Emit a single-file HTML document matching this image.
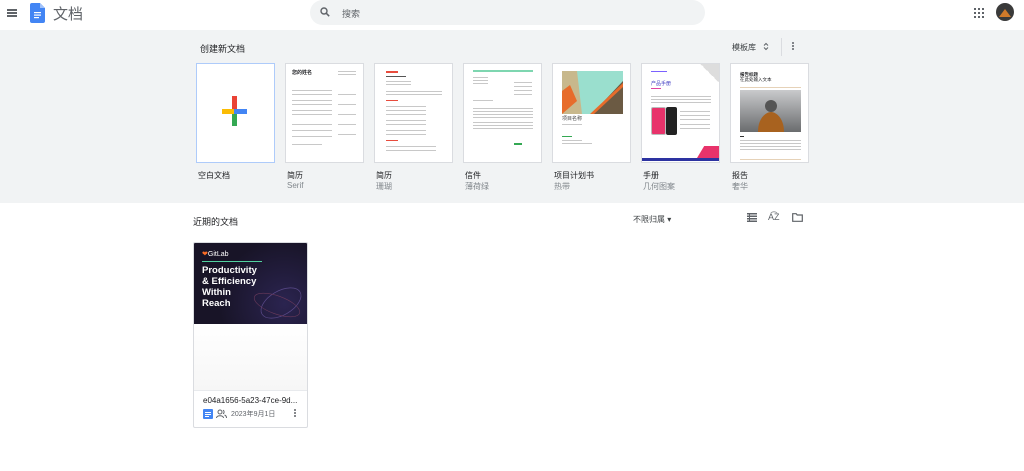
<!DOCTYPE html>
<html><head><meta charset="utf-8"><style>
*{margin:0;padding:0;box-sizing:border-box}
body{width:1024px;height:471px;overflow:hidden;background:#fff;font-family:"Liberation Sans","Noto Sans CJK SC",sans-serif;color:#202124;position:relative}
.abs{position:absolute}
.gray{position:absolute;left:0;top:30px;width:1024px;height:173px;background:#f1f3f4}
.card{position:absolute;top:63px;width:79px;height:100px;background:#fff;border:1px solid #dadce0;overflow:hidden}
.lbl{position:absolute;top:170px;font-size:8px;color:#202124}
.sub{position:absolute;top:181px;font-size:8px;color:#80868b}
.ln{position:absolute;height:1px;background:#c8c8c8}
</style></head><body>
<div class="abs" style="left:7px;top:9px;width:10px;height:1.5px;background:#5f6368"></div>
<div class="abs" style="left:7px;top:12px;width:10px;height:1.5px;background:#5f6368"></div>
<div class="abs" style="left:7px;top:15px;width:10px;height:1.5px;background:#5f6368"></div>
<svg class="abs" style="left:30px;top:3px" width="15" height="20" viewBox="0 0 15 20"><path d="M2 0h8l5 5v13a2 2 0 0 1-2 2H2a2 2 0 0 1-2-2V2a2 2 0 0 1 2-2z" fill="#4285f4"/><path d="M10 0v5h5z" fill="#a1c2fa"/><rect x="4" y="9" width="7" height="1.2" fill="#fff"/><rect x="4" y="11.5" width="7" height="1.2" fill="#fff"/><rect x="4" y="14" width="5" height="1.2" fill="#fff"/></svg>
<div class="abs" style="left:53px;top:3px;font-size:15px;color:#5f6368">文档</div>
<div class="abs" style="left:310px;top:0;width:395px;height:25px;background:#f1f3f4;border-radius:13px"></div>
<svg class="abs" style="left:320px;top:7px" width="10" height="10" viewBox="0 0 10 10"><circle cx="4" cy="4" r="3" fill="none" stroke="#5f6368" stroke-width="1.4"/><path d="M6.2 6.2L9.2 9.2" stroke="#5f6368" stroke-width="1.5"/></svg>
<div class="abs" style="left:342px;top:7px;font-size:9px;color:#5f6368">搜索</div>
<svg class="abs" style="left:974px;top:8px" width="10" height="10"><g fill="#5f6368"><rect x="0" y="0" width="2" height="2"/><rect x="4" y="0" width="2" height="2"/><rect x="8" y="0" width="2" height="2"/><rect x="0" y="4" width="2" height="2"/><rect x="4" y="4" width="2" height="2"/><rect x="8" y="4" width="2" height="2"/><rect x="0" y="8" width="2" height="2"/><rect x="4" y="8" width="2" height="2"/><rect x="8" y="8" width="2" height="2"/></g></svg>
<svg class="abs" style="left:996px;top:3px" width="18" height="18"><circle cx="9" cy="9" r="9" fill="#3a3a3a"/><path d="M3 14l6-8 6 8z" fill="#d07a2a"/></svg>
<div class="gray"></div>
<div class="abs" style="left:200px;top:42px;font-size:9px;color:#202124">创建新文档</div>
<div class="abs" style="left:732px;top:42px;font-size:8px;color:#3c4043">模板库</div>
<svg class="abs" style="left:763px;top:42px" width="6" height="9"><path d="M1 3.5L3 1.5 5 3.5M1 5.5L3 7.5 5 5.5" fill="none" stroke="#5f6368" stroke-width="1"/></svg>
<div class="abs" style="left:781px;top:38px;width:1px;height:18px;background:#dadce0"></div>
<div class="abs" style="left:792px;top:42px;width:2px;height:2px;background:#5f6368;border-radius:1px;box-shadow:0 3px 0 #5f6368,0 6px 0 #5f6368"></div>
<div class="card" style="left:196px;border-color:#aecbfa">
 <div class="abs" style="left:25px;top:45px;width:12px;height:5px;background:#fbbc04"></div>
 <div class="abs" style="left:37px;top:45px;width:13px;height:5px;background:#4285f4"></div>
 <div class="abs" style="left:35px;top:32px;width:5px;height:13px;background:#ea4335"></div>
 <div class="abs" style="left:35px;top:50px;width:5px;height:12px;background:#34a853"></div>
</div>
<div class="lbl" style="left:198px">空白文档</div>
<div class="card" style="left:285px">
 <div class="abs" style="left:6px;top:5px;font-size:5px;font-weight:bold">您的姓名</div>
 <div class="ln" style="left:52px;top:7px;width:18px"></div><div class="ln" style="left:52px;top:10px;width:18px"></div>
 <div class="ln" style="left:6px;top:26px;width:40px"></div><div class="ln" style="left:6px;top:30px;width:40px"></div><div class="ln" style="left:6px;top:36px;width:40px"></div><div class="ln" style="left:6px;top:40px;width:40px"></div><div class="ln" style="left:6px;top:46px;width:40px"></div><div class="ln" style="left:6px;top:50px;width:40px"></div><div class="ln" style="left:6px;top:60px;width:40px"></div><div class="ln" style="left:6px;top:66px;width:40px"></div><div class="ln" style="left:6px;top:72px;width:40px"></div><div class="ln" style="left:6px;top:80px;width:30px"></div>
 <div class="ln" style="left:52px;top:30px;width:18px"></div><div class="ln" style="left:52px;top:40px;width:18px"></div><div class="ln" style="left:52px;top:50px;width:18px"></div><div class="ln" style="left:52px;top:60px;width:18px"></div><div class="ln" style="left:52px;top:70px;width:18px"></div>
</div>
<div class="lbl" style="left:287px">简历</div><div class="sub" style="left:287px">Serif</div>
<div class="card" style="left:374px">
 <div class="abs" style="left:11px;top:7px;width:12px;height:2px;background:#e84c3d"></div>
 <div class="ln" style="left:11px;top:12px;width:20px;background:#555"></div>
 <div class="ln" style="left:11px;top:17px;width:25px"></div><div class="ln" style="left:11px;top:20px;width:25px"></div>
 <div class="ln" style="left:11px;top:27px;width:56px"></div><div class="ln" style="left:11px;top:30px;width:56px"></div>
 <div class="ln" style="left:11px;top:36px;width:12px;background:#e84c3d"></div>
 <div class="ln" style="left:11px;top:42px;width:40px"></div><div class="ln" style="left:11px;top:46px;width:40px"></div><div class="ln" style="left:11px;top:50px;width:40px"></div><div class="ln" style="left:11px;top:56px;width:40px"></div><div class="ln" style="left:11px;top:60px;width:40px"></div><div class="ln" style="left:11px;top:66px;width:40px"></div><div class="ln" style="left:11px;top:70px;width:40px"></div>
 <div class="ln" style="left:11px;top:76px;width:12px;background:#e84c3d"></div>
 <div class="ln" style="left:11px;top:82px;width:50px"></div><div class="ln" style="left:11px;top:86px;width:50px"></div>
</div>
<div class="lbl" style="left:376px">简历</div><div class="sub" style="left:376px">珊瑚</div>
<div class="card" style="left:463px">
 <div class="abs" style="left:9px;top:6px;width:60px;height:1.5px;background:#7ed6b0"></div>
 <div class="ln" style="left:9px;top:13px;width:15px"></div><div class="ln" style="left:9px;top:16px;width:15px"></div><div class="ln" style="left:9px;top:19px;width:15px"></div>
 <div class="ln" style="left:50px;top:18px;width:18px"></div><div class="ln" style="left:50px;top:22px;width:18px"></div><div class="ln" style="left:50px;top:26px;width:18px"></div><div class="ln" style="left:50px;top:30px;width:18px"></div>
 <div class="ln" style="left:9px;top:36px;width:20px"></div>
 <div class="ln" style="left:9px;top:44px;width:60px"></div><div class="ln" style="left:9px;top:47px;width:60px"></div><div class="ln" style="left:9px;top:50px;width:60px"></div><div class="ln" style="left:9px;top:53px;width:60px"></div><div class="ln" style="left:9px;top:58px;width:60px"></div><div class="ln" style="left:9px;top:61px;width:60px"></div><div class="ln" style="left:9px;top:64px;width:60px"></div>
 <div class="ln" style="left:50px;top:79px;width:8px;background:#34a853;height:1.5px"></div>
</div>
<div class="lbl" style="left:465px">信件</div><div class="sub" style="left:465px">薄荷绿</div>
<div class="card" style="left:552px">
 <svg class="abs" style="left:9px;top:7px" width="61" height="43" viewBox="0 0 61 43"><rect width="61" height="43" fill="#6dbfab"/><polygon points="0,0 20,0 40,43 0,43" fill="#c8b88c"/><polygon points="15,0 61,0 61,10 30,43 20,43" fill="#9adfce"/><polygon points="61,10 61,43 30,43" fill="#6b5a43"/><polygon points="0,20 8,14 15,30 0,43" fill="#e76c2b"/><polygon points="61,12 61,16 32,43 28,43" fill="#e76c2b"/></svg>
 <div class="abs" style="left:9px;top:51px;font-size:5px;color:#444">项目名称</div>
 <div class="ln" style="left:9px;top:60px;width:20px"></div>
 <div class="ln" style="left:9px;top:72px;width:10px;background:#34a853"></div>
 <div class="ln" style="left:9px;top:76px;width:20px"></div><div class="ln" style="left:9px;top:79px;width:30px"></div>
</div>
<div class="lbl" style="left:554px">项目计划书</div><div class="sub" style="left:554px">热带</div>
<div class="card" style="left:641px">
 <div class="abs" style="left:58px;top:0;width:21px;height:20px;background:linear-gradient(45deg,#fff 50%,#ddd 50%)"></div>
 <div class="ln" style="left:9px;top:7px;width:16px;background:#7b61ff"></div>
 <div class="abs" style="left:9px;top:16px;font-size:5px;color:#3d3ac2">产品手册</div>
 <div class="ln" style="left:9px;top:24px;width:10px;background:#e040a0"></div>
 <div class="ln" style="left:9px;top:32px;width:60px"></div><div class="ln" style="left:9px;top:35px;width:60px"></div><div class="ln" style="left:9px;top:38px;width:60px"></div>
 <div class="abs" style="left:9px;top:43px;width:15px;height:28px;background:#e8336b;border-radius:2px;border:1px solid #bbb"></div>
 <div class="abs" style="left:24px;top:43px;width:11px;height:28px;background:#222;border-radius:2px"></div>
 <div class="ln" style="left:38px;top:47px;width:30px"></div><div class="ln" style="left:38px;top:51px;width:30px"></div><div class="ln" style="left:38px;top:55px;width:30px"></div><div class="ln" style="left:38px;top:60px;width:30px"></div><div class="ln" style="left:38px;top:64px;width:30px"></div>
 <div class="abs" style="left:55px;top:82px;width:24px;height:12px;background:#e8336b;clip-path:polygon(30% 0,100% 0,100% 100%,0 100%)"></div>
 <div class="abs" style="left:0;top:94px;width:79px;height:3px;background:#2d33a1"></div>
</div>
<div class="lbl" style="left:643px">手册</div><div class="sub" style="left:643px">几何图案</div>
<div class="card" style="left:730px">
 <div class="abs" style="left:9px;top:8px;font-size:4.5px;font-weight:bold;line-height:5px">报告标题<br><span style="font-weight:normal">在此处输入文本</span></div>
 <div class="ln" style="left:9px;top:23px;width:61px;background:#e6d2b8"></div>
 <svg class="abs" style="left:9px;top:26px" width="61" height="42"><defs><linearGradient id="g" x1="0" y1="0" x2="0" y2="1"><stop offset="0" stop-color="#c9cacc"/><stop offset="1" stop-color="#6a6c6e"/></linearGradient></defs><rect width="61" height="42" fill="url(#g)"/><path d="M18 42c0-14 8-20 13-20s13 6 13 20z" fill="#a8621f"/><circle cx="31" cy="16" r="6" fill="#555"/></svg>
 <div class="ln" style="left:9px;top:72px;width:4px;background:#333"></div>
 <div class="ln" style="left:9px;top:76px;width:61px"></div><div class="ln" style="left:9px;top:79px;width:61px"></div><div class="ln" style="left:9px;top:82px;width:61px"></div><div class="ln" style="left:9px;top:85px;width:61px"></div>
 <div class="ln" style="left:9px;top:95px;width:61px;background:#e6d2b8"></div>
</div>
<div class="lbl" style="left:732px">报告</div><div class="sub" style="left:732px">奢华</div>
<div class="abs" style="left:193px;top:215px;font-size:9px">近期的文档</div>
<div class="abs" style="left:633px;top:214px;font-size:8px;color:#3c4043">不限归属 ▾</div>
<svg class="abs" style="left:747px;top:213px" width="10" height="9"><g fill="#5f6368"><rect width="10" height="1.5"/><rect y="2.5" width="10" height="1.5"/><rect y="5" width="10" height="1.5"/><rect y="7.5" width="10" height="1.5"/><rect x="2" width="1" height="9"/></g></svg>
<div class="abs" style="left:768px;top:212px;font-size:9px;color:#5f6368">A͡Z</div>
<svg class="abs" style="left:792px;top:213px" width="11" height="9"><path d="M0.7 0.7h3.5l1 1.3h5.1v6.3H0.7z" fill="none" stroke="#5f6368" stroke-width="1.2"/></svg>
<div class="abs" style="left:193px;top:242px;width:115px;height:186px;border:1px solid #dadce0;border-radius:2px;overflow:hidden">
 <div class="abs" style="left:0;top:0;width:113px;height:81px;background:radial-gradient(circle at 80% 75%,#2b2450,#181427 60%)">
  <div class="abs" style="left:8px;top:7px;font-size:7px;color:#fff"><span style="color:#fc6d26">❤</span>GitLab</div>
  <div class="abs" style="left:8px;top:18px;width:60px;height:1px;background:#52d1a0"></div>
  <div class="abs" style="left:8px;top:22px;font-size:9.5px;line-height:11px;font-weight:bold;color:#fff">Productivity<br>&amp; Efficiency<br>Within<br>Reach</div>
  <svg class="abs" style="left:55px;top:38px" width="58" height="43"><ellipse cx="32" cy="22" rx="22" ry="12" fill="none" stroke="#5a4a8a" stroke-width=".7" transform="rotate(-30 32 22)"/><ellipse cx="28" cy="24" rx="24" ry="9" fill="none" stroke="#6a3a5a" stroke-width=".6" transform="rotate(20 28 24)"/></svg>
 </div>
 <div class="abs" style="left:0;top:81px;width:113px;height:66px;background:linear-gradient(#fff,#f6f6f6)"></div>
 <div class="abs" style="left:0;top:147px;width:113px;height:1px;background:#e8eaed"></div>
 <div class="abs" style="left:9px;top:153px;font-size:8px;color:#202124">e04a1656-5a23-47ce-9d...</div>
 <div class="abs" style="left:9px;top:166px;width:10px;height:10px;background:#4285f4;border-radius:1px"><div class="abs" style="left:2px;top:3px;width:6px;height:1px;background:#fff"></div><div class="abs" style="left:2px;top:5px;width:6px;height:1px;background:#fff"></div><div class="abs" style="left:2px;top:7px;width:4px;height:1px;background:#fff"></div></div>
 <svg class="abs" style="left:22px;top:166px" width="11" height="10"><circle cx="4" cy="3" r="2" fill="none" stroke="#5f6368"/><path d="M0.5 9c0-3 7-3 7 0M7 1.2a2 2 0 0 1 0 3.6M8.5 6c1.5.5 2 1.5 2 3" fill="none" stroke="#5f6368"/></svg>
 <div class="abs" style="left:37px;top:166px;font-size:7px;color:#5f6368">2023年9月1日</div>
 <div class="abs" style="left:100px;top:166px;width:2px;height:2px;background:#5f6368;border-radius:1px;box-shadow:0 3px 0 #5f6368,0 6px 0 #5f6368"></div>
</div>
</body></html>
